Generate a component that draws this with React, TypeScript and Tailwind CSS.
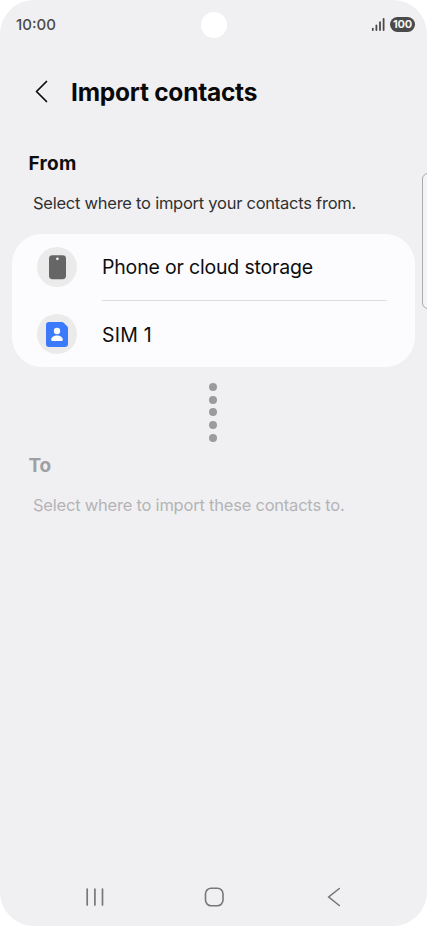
const sources = [
  { name: "Phone or cloud storage", icon: PhoneIcon, tracking: "tracking-[-0.18px]" },
  { name: "SIM 1", icon: SimIcon, tracking: "tracking-[0.2px]" },
];

function PhoneIcon() {
  return (
    <svg width="40" height="40" viewBox="0 0 40 40" fill="none">
      <rect x="12" y="8.2" width="17" height="24" rx="3.4" fill="#666667" />
      <circle cx="20.4" cy="11.8" r="1.4" fill="#eeeeef" />
    </svg>
  );
}

function SimIcon() {
  return (
    <svg width="40" height="40" viewBox="0 0 40 40" fill="none">
      <path
        d="M12 8h12.8c.8 0 1.4.3 1.900.8l3.500 3.500c.5.5.8 1.100.8 1.900V30a3 3 0 0 1-3 3H12a3 3 0 0 1-3-3V11a3 3 0 0 1 3-3Z"
        fill="#3b7afb"
      />
      <circle cx="20" cy="17" r="3.2" fill="#fcfcfe" />
      <path d="M14.200 25.800c0-2.700 2.500-4.300 5.800-4.300s5.800 1.600 5.800 4.300c0 .8-.4 1.200-1.200 1.200h-9.200c-.8 0-1.200-.4-1.200-1.200Z" fill="#fcfcfe" />
    </svg>
  );
}

const StatusBar = () => (
  <div className="relative flex h-12 items-center justify-between pl-4 pr-3 text-[#4a4a4b]">
    <span className="pt-px text-[15px] font-medium leading-5">10:00</span>
    <div className="absolute left-[200.5px] top-3 size-[26px] rounded-full bg-white" />
    <div className="flex items-center gap-[5px]">
      <svg width="14" height="14" viewBox="0 0 14 14" stroke="#4a4a4b" strokeWidth="1.8" strokeLinecap="round">
        <path d="M1.800 13v-1.400M5.400 13V8.400M9 13V5.200M12.600 13V1.800" />
      </svg>
      <span className="flex h-[15px] w-[25px] items-center justify-center rounded-full bg-[#4a4a4b] text-[11px] font-bold leading-none tracking-[-0.2px] text-[#f4f4f5]">
        100
      </span>
    </div>
  </div>
);

const NavigationBar = () => (
  <nav className="mt-auto flex h-[59px] items-center">
    <svg className="ml-[85px]" width="20" height="20" viewBox="0 0 20 20" stroke="#777778" strokeWidth="1.7" strokeLinecap="round">
      <path d="M2.200 2v16M9.900 2v16M17.500 2v16" />
    </svg>
    <svg className="ml-[99px]" width="20" height="20" viewBox="0 0 20 20" fill="none" stroke="#777778" strokeWidth="1.6">
      <rect x="1.5" y="1.2" width="17.5" height="17.5" rx="5.6" />
    </svg>
    <svg className="ml-[100px]" width="20" height="20" viewBox="0 0 20 20" fill="none" stroke="#777778" strokeWidth="1.6" strokeLinecap="round">
      <path d="M15.300 1.500 4.700 10l10.600 8.500" />
    </svg>
  </nav>
);

export default function App() {
  return (
    <div className="h-[926px] w-[427px] overflow-hidden bg-white font-['Inter',sans-serif]">
      <main className="relative flex h-full flex-col overflow-hidden rounded-[34px] bg-[#f0f0f2]">
        <StatusBar />

        {/* Title */}
        <header className="flex h-[88px] items-center pl-[31px]">
          <button className="flex size-5 items-center justify-center" aria-label="Back">
            <svg width="20" height="24" viewBox="0 0 20 24" fill="none" stroke="#0b0b0c" strokeWidth="1.7" strokeLinecap="round" strokeLinejoin="round">
              <path d="M15.500 1.500 5.500 11.500l10 10" />
            </svg>
          </button>
          <h1 className="ml-5 whitespace-nowrap pb-px text-[24.5px] font-bold leading-8 tracking-[-0.25px] text-[#09090a]">
            Import contacts
          </h1>
        </header>

        {/* Source */}
        <section>
          <h2 className="mt-[15px] pl-[28.5px] text-[19px] font-bold leading-[26px] tracking-[0.25px] text-[#0e0e0f]">From</h2>
          <p className="mt-3.5 whitespace-nowrap pl-[33px] text-[16.5px] leading-6 tracking-[-0.25px] text-[#303032]">
            Select where to import your contacts from.
          </p>
          <ul className="ml-3 mt-[19px] h-[133px] w-[403px] rounded-[30px] bg-[#fcfcfe]">
            {sources.map((source, i) => (
              <li key={source.name} className="flex h-[67px] items-center pl-[25px]">
                <div className="mb-[1.5px] size-10 shrink-0 rounded-full bg-[#ebebec]">
                  <source.icon />
                </div>
                <div
                  className={`ml-[25px] flex h-[67px] w-[285px] items-center whitespace-nowrap pt-0.5 text-[19.5px] text-[#0e0e0f] ${source.tracking} ${
                    i === 0 ? "border-b border-[#dedee0]" : ""
                  }`}
                >
                  {source.name}
                </div>
              </li>
            ))}
          </ul>
        </section>

        <div className="mt-4 flex flex-col items-center gap-[4.7px] pr-px">
          {[0, 1, 2, 3, 4].map((dot) => (
            <span key={dot} className="size-2 rounded-full bg-[#9b9b9d]" />
          ))}
        </div>

        {/* Destination */}
        <section>
          <h2 className="mt-3 pl-[28.5px] text-[19px] font-bold leading-6 tracking-[-0.3px] text-[#a0a0a2]">To</h2>
          <p className="mt-[15px] whitespace-nowrap pl-[33px] text-[16.5px] leading-6 tracking-[-0.22px] text-[#b4b4b6]">
            Select where to import these contacts to.
          </p>
        </section>

        <NavigationBar />

        {/* Edge panel handle */}
        <div className="absolute left-[422px] top-[173px] h-[136px] w-4 rounded-[6px] border border-[#aaaaac] bg-[#f4f4f6]" />
      </main>
    </div>
  );
}
